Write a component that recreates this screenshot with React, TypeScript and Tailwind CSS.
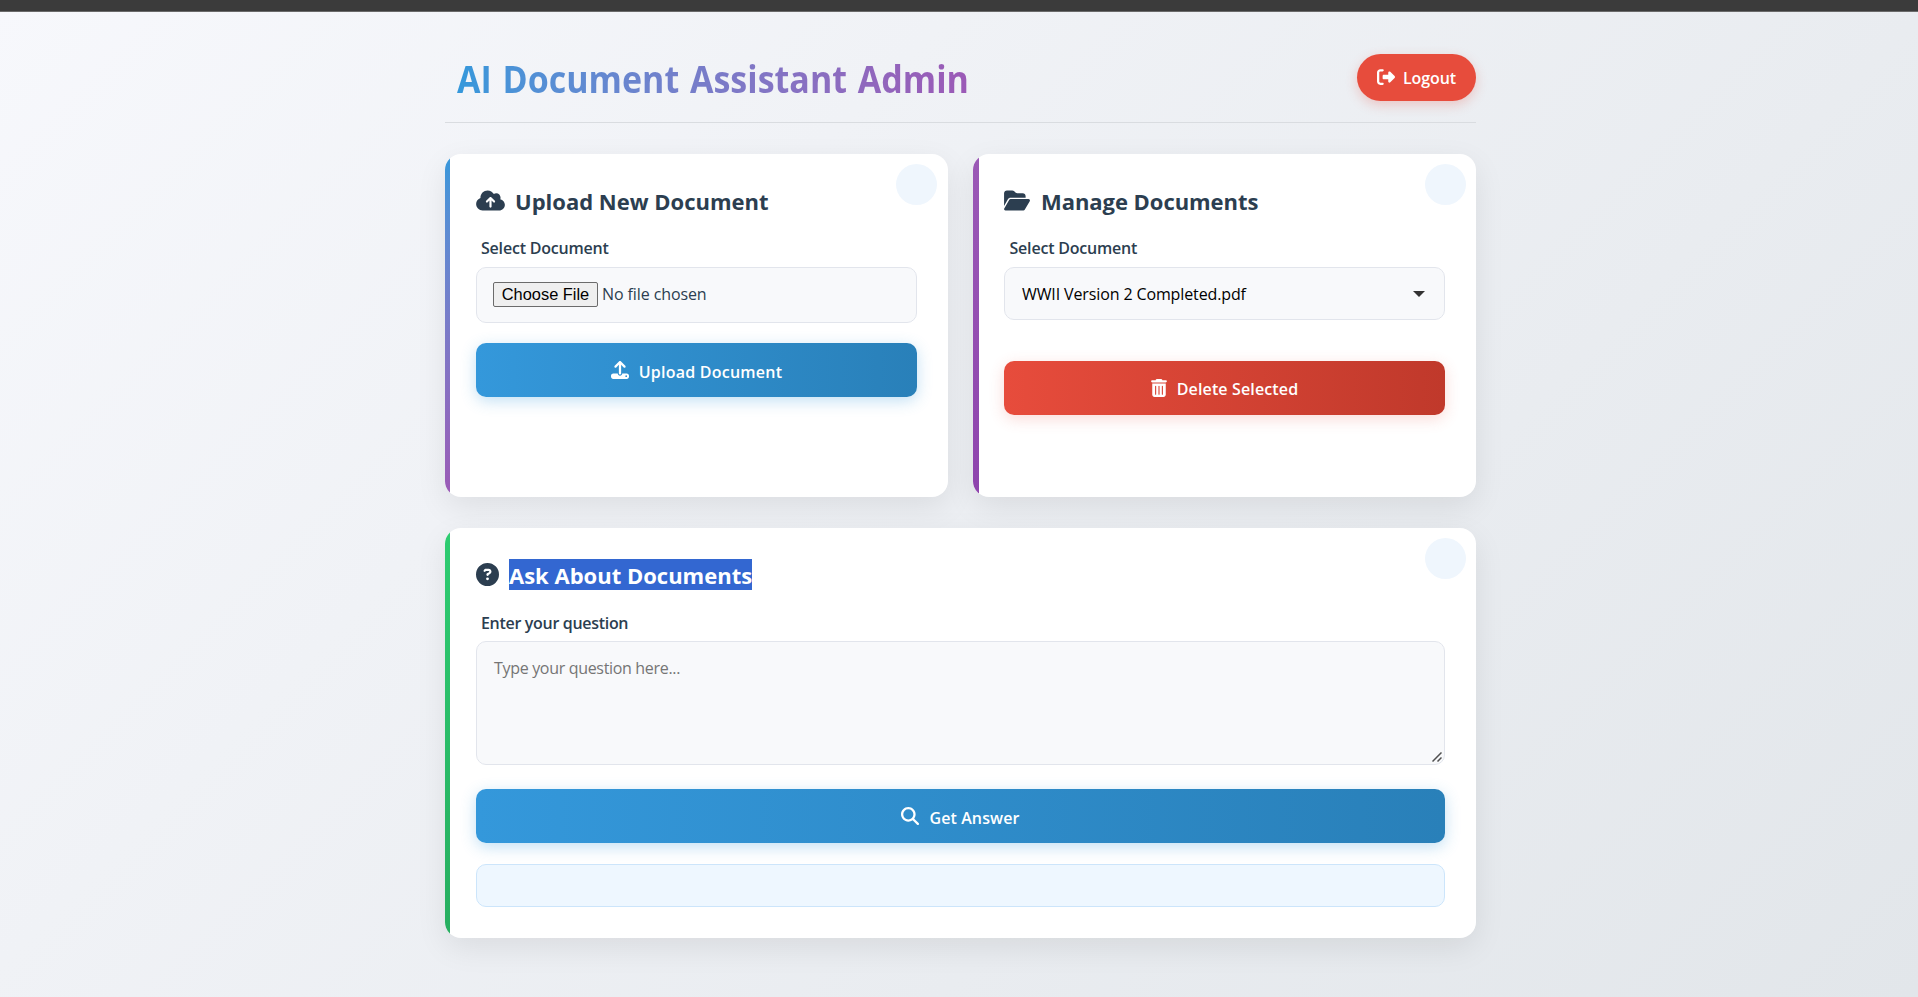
import type { ReactNode } from "react";
import {
  FaCircleQuestion,
  FaCloudArrowUp,
  FaFolderOpen,
  FaMagnifyingGlass,
  FaRightFromBracket,
  FaTrashCan,
  FaUpload,
} from "react-icons/fa6";

function Card({
  bar,
  dot = "right-[10px]",
  className,
  children,
}: {
  bar: string;
  dot?: string;
  className: string;
  children: ReactNode;
}) {
  return (
    <section
      className={`relative flex flex-col overflow-hidden rounded-[16px] bg-white px-[31px] pt-[31px] shadow-[0_10px_31px_rgba(0,0,0,0.08)] ${className}`}
    >
      <div className={`absolute inset-y-0 left-0 ${bar}`} />
      <div className={`absolute top-[10px] size-[41px] rounded-full bg-[#eff6fd] ${dot}`} />
      {children}
    </section>
  );
}

function Heading({ icon, className, children }: { icon: ReactNode; className: string; children: ReactNode }) {
  return (
    <h2 className={`flex h-[31px] items-center text-[22px] leading-[31px] font-bold whitespace-nowrap ${className}`}>
      {icon}
      <span className="pt-[1px]">{children}</span>
    </h2>
  );
}

function Action({ icon, className, children }: { icon: ReactNode; className: string; children: ReactNode }) {
  return (
    <button
      className={`flex h-[54px] shrink-0 items-center justify-center gap-[10px] rounded-[10px] text-[16px] font-semibold whitespace-nowrap text-white ${className}`}
    >
      {icon}
      <span>{children}</span>
    </button>
  );
}

const label = "flex h-[26px] items-center pl-[5px] text-[16px] font-semibold";
const field = "rounded-[10px] border border-[#e2e5ec] bg-[#f8f9fb]";
const blue =
  "bg-linear-to-r from-[#3498db] to-[#2980b9] shadow-[0_4px_15px_rgba(52,152,219,0.3)] [&>span]:pt-[3px]";
const red =
  "bg-linear-to-r from-[#e74c3c] to-[#c0392b] shadow-[0_4px_15px_rgba(231,76,60,0.2)] [&>span]:pt-[2px]";

export default function App() {
  return (
    <div className="flex h-[997px] flex-col overflow-hidden bg-linear-135 from-[#f7f8fc] to-[#e2e6ea] font-['Open_Sans','Noto_Sans',sans-serif] text-[#2c3e50]">
      <div className="h-[12px] shrink-0 border-b border-[#6a6a6a] bg-[#3b3b3b]" />
      <main className="ml-[445px] flex w-[1031px] flex-col pt-[42px]">
        <header className="flex h-[69px] items-start justify-between border-b border-[#d9dce0] pl-[12px]">
          <h1 className="origin-left scale-x-[0.925] bg-linear-to-r from-[#3498db] to-[#9b59b6] bg-clip-text text-[36.8px] leading-[51px] font-bold whitespace-nowrap text-transparent [word-spacing:2px]">
            AI Document Assistant Admin
          </h1>
          <button className="flex h-[47px] w-[119px] items-center justify-center gap-[8px] rounded-full bg-[#e74c3c] text-[16px] font-semibold tracking-[-0.1px] text-white shadow-[0_4px_12px_rgba(231,76,60,0.25)]">
            <FaRightFromBracket className="mb-[2px] size-[18px]" />
            Logout
          </button>
        </header>

        <div className="mt-[31px] grid grid-cols-2 gap-[25px]">
          <Card bar="w-[5px] bg-linear-to-b from-[#3498db] to-[#9b59b6]" dot="right-[11px]" className="h-[343px]">
            <Heading className="gap-[10px]" icon={<FaCloudArrowUp className="h-[23px] w-[29px]" />}>
              Upload New Document
            </Heading>
            <label className={`mt-[19px] tracking-[-0.2px] ${label}`}>Select Document</label>
            <div className={`mt-[6px] flex h-[56px] items-start gap-[4px] px-[16px] pt-[14px] text-[16px] ${field}`}>
              <span className="flex h-[25px] w-[105px] items-center justify-center rounded-[2px] border border-[#6b6b6b] bg-[#efefef] font-['Liberation_Sans',sans-serif] text-[16.4px] text-black">
                Choose File
              </span>
              <span className="leading-[25px] tracking-[-0.1px]">No file chosen</span>
            </div>
            <Action
              icon={<FaUpload className="mb-[1px] size-[18px]" />}
              className={`mt-[20px] tracking-[0.23px] ${blue}`}
            >
              Upload Document
            </Action>
          </Card>

          <Card bar="w-[6px] bg-linear-to-b from-[#9b59b6] to-[#8e44ad]" className="h-[343px]">
            <Heading className="gap-[11px] tracking-[-0.05px]" icon={<FaFolderOpen className="h-[23px] w-[26px]" />}>
              Manage Documents
            </Heading>
            <label className={`mt-[19px] tracking-[-0.2px] ${label}`}>
              <span className="pl-[0.5px]">Select Document</span>
            </label>
            <div
              className={`mt-[6px] flex h-[53px] items-center justify-between pr-[19px] pl-[17px] text-[16px] tracking-[-0.12px] text-black ${field}`}
            >
              WWII Version 2 Completed.pdf
              <svg viewBox="0 0 12 6" className="h-[6px] w-[12px] fill-[#333333]">
                <path d="M0 0h12L6 6z" />
              </svg>
            </div>
            <Action
              icon={<FaTrashCan className="mb-[1px] h-[18px] w-[16px]" />}
              className={`mt-[41px] tracking-[0.14px] ${red}`}
            >
              Delete Selected
            </Action>
          </Card>
        </div>

        <Card bar="w-[5px] bg-linear-to-b from-[#2ecc71] to-[#27ae60]" className="mt-[31px] h-[410px]">
          <Heading className="gap-[10px]" icon={<FaCircleQuestion className="size-[23px]" />}>
            <span className="-mt-[1px] block h-[31px] bg-[#3367d1] leading-[33px] text-white">Ask About Documents</span>
          </Heading>
          <label className={`mt-[20px] tracking-[-0.31px] ${label}`}>Enter your question</label>
          <div
            className={`mt-[5px] flex h-[124px] items-start justify-between pt-[13px] pl-[17px] text-[16px] leading-[26px] tracking-[-0.32px] text-[#757575] ${field}`}
          >
            Type your question here...
            <svg viewBox="0 0 10 10" className="mr-[2px] mb-[2px] size-[10px] self-end fill-none stroke-[#505050] stroke-[1.5]">
              <path d="M0.5 9.5l9-9M5.5 9.5l4-4" />
            </svg>
          </div>
          <Action
            icon={<FaMagnifyingGlass className="mb-[1px] size-[18px]" />}
            className={`mt-[24px] tracking-[0.1px] ${blue}`}
          >
            Get Answer
          </Action>
          <div className="mt-[21px] h-[43px] rounded-[10px] border border-[#cce5fb] bg-[#eef7ff]" />
        </Card>
      </main>
    </div>
  );
}
